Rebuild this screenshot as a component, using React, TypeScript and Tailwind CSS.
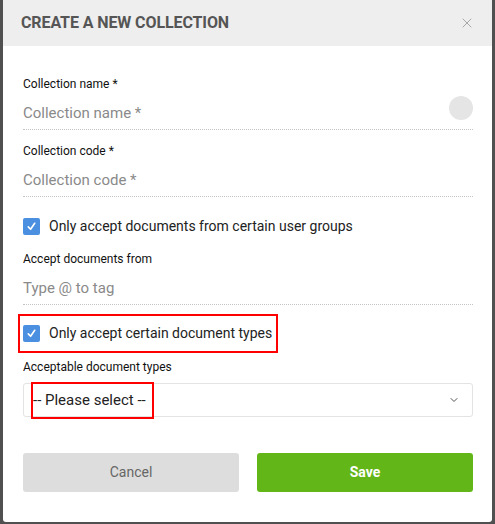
import { ChevronDown, X } from 'lucide-react';

function Check() {
  return (
    <span className="flex h-[17px] w-[17px] items-center justify-center rounded-[2px] bg-[#4a8fe0]">
      <svg width="11" height="11" viewBox="0 0 12 12" fill="none">
        <path d="M2.5 6.5 L5 9 L9.5 2.5" stroke="white" strokeWidth="1.8" strokeLinecap="round" strokeLinejoin="round" />
      </svg>
    </span>
  );
}

function Label({ children, className = '' }: { children: React.ReactNode; className?: string }) {
  return <div className={`h-[14px] text-[12px] leading-[14px] text-[#111] ${className}`}>{children}</div>;
}

function UnderlineInput({ placeholder, extra }: { placeholder: string; extra?: React.ReactNode }) {
  return (
    <div className="relative mt-[6px] flex h-[33px] items-center border-b border-dotted border-[#c4c4c4]">
      <span className="text-[15px] text-[#8a8a8a]">{placeholder}</span>
      {extra}
    </div>
  );
}

export default function App() {
  return (
    <div
      className="flex h-[524px] w-[495px] items-start bg-[#505050] px-[3px] pb-[3px]"
      style={{ fontFamily: 'Roboto, "Liberation Sans", sans-serif' }}
    >
      <div className="w-[489px] overflow-hidden rounded-b-[3px] bg-white">
        <div className="flex h-[46px] items-center justify-between bg-[#eeeeee] pr-[17px] pl-[18px]">
          <h2 className="text-[16px] font-bold tracking-[-0.1px] text-[#555]">CREATE A NEW COLLECTION</h2>
          <X size={16} strokeWidth={1.5} className="text-[#a8a8a8]" />
        </div>

        <div className="flex flex-col pt-[31px] pr-[19px] pb-[30px] pl-[20px]">
          <Label>Collection name *</Label>
          <UnderlineInput
            placeholder="Collection name *"
            extra={<span className="absolute top-[-1px] right-0 h-[24px] w-[24px] rounded-full bg-[#e5e5e5]" />}
          />

          <Label className="mt-[14px]">Collection code *</Label>
          <UnderlineInput placeholder="Collection code *" />

          <div className="mt-[20px] flex h-[18px] items-center gap-[9px]">
            <Check />
            <span className="text-[14px] text-[#222]">Only accept documents from certain user groups</span>
          </div>

          <Label className="mt-[17px]">Accept documents from</Label>
          <UnderlineInput placeholder="Type @ to tag" />

          <div className="relative mt-[19px] flex h-[18px] items-center gap-[9px]">
            <Check />
            <span className="text-[14px] text-[#222]">Only accept certain document types</span>
            <span className="absolute top-[-10px] left-[-5px] h-[39px] w-[260px] border-2 border-[#ff0000]" />
          </div>

          <Label className="mt-[18px]">Acceptable document types</Label>
          <div className="relative mt-[9px] flex h-[34px] items-center justify-between rounded-[3px] border border-[#e3e3e3] pr-[12px] pl-[9px]">
            <span className="text-[15px] text-[#222]">-- Please select --</span>
            <ChevronDown size={12} strokeWidth={2} className="text-[#555]" />
            <span className="absolute top-[-2px] left-[7px] h-[37px] w-[123px] border-2 border-[#ff0000]" />
          </div>

          <div className="mt-[36px] grid grid-cols-2 gap-[18px]">
            <button className="h-[39px] rounded-[3px] bg-[#dddddd] text-[14px] text-[#666]">Cancel</button>
            <button className="h-[39px] rounded-[3px] bg-[#63b617] text-[14px] font-bold text-white">Save</button>
          </div>
        </div>
      </div>
    </div>
  );
}
